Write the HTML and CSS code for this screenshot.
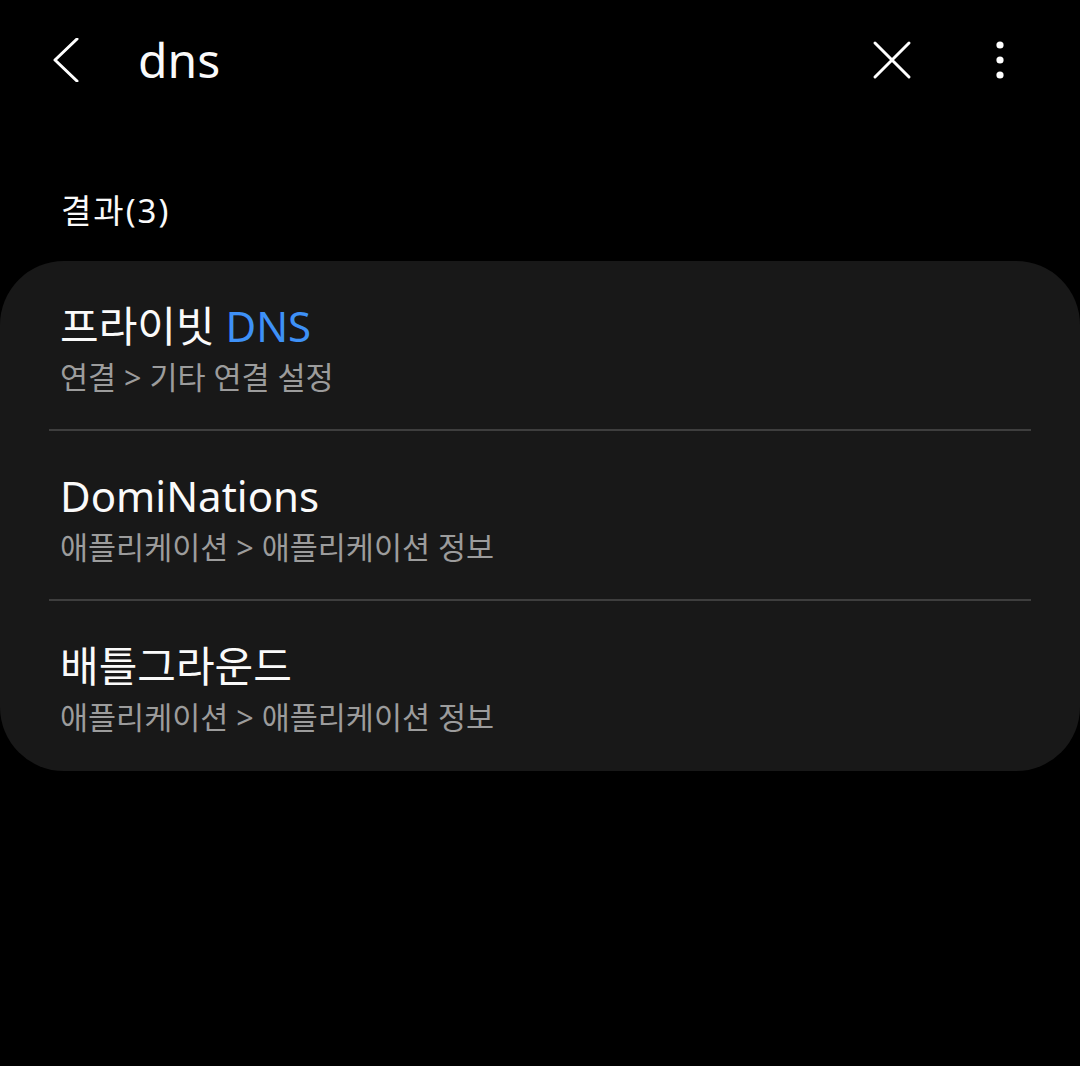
FILE: index.html
```html
<!DOCTYPE html>
<html lang="ko">
<head>
    <meta charset="UTF-8">
    <meta name="viewport" content="width=device-width, initial-scale=1.0">
    <title>설정 검색</title>
    <link rel="stylesheet" href="styles.css">
</head>
<body>
    <header class="search-bar">
        <button class="icon-btn back-btn" aria-label="뒤로">
            <svg width="44" height="44" viewBox="0 0 44 44">
                <path d="M33 1 L11 22 L33 43" fill="none" stroke="#fff" stroke-width="3" stroke-linecap="round" stroke-linejoin="round"/>
            </svg>
        </button>
        <div class="query">dns</div>
        <button class="icon-btn clear-btn" aria-label="지우기">
            <svg width="44" height="44" viewBox="0 0 44 44">
                <path d="M5 5 L39 39 M39 5 L5 39" fill="none" stroke="#fff" stroke-width="3" stroke-linecap="round"/>
            </svg>
        </button>
        <button class="icon-btn more-btn" aria-label="더보기">
            <svg width="44" height="44" viewBox="0 0 44 44">
                <circle cx="22" cy="7" r="3.6" fill="#fff"/>
                <circle cx="22" cy="22" r="3.6" fill="#fff"/>
                <circle cx="22" cy="37" r="3.6" fill="#fff"/>
            </svg>
        </button>
    </header>

    <p class="result-count">결과(3)</p>

    <div class="result-card">
        <div class="result-item">
            <div class="result-title">프라이빗 <span class="match">DNS</span></div>
            <div class="result-path">연결 &gt; 기타 연결 설정</div>
        </div>
        <div class="result-item">
            <div class="result-title">DomiNations</div>
            <div class="result-path">애플리케이션 &gt; 애플리케이션 정보</div>
        </div>
        <div class="result-item">
            <div class="result-title">배틀그라운드</div>
            <div class="result-path">애플리케이션 &gt; 애플리케이션 정보</div>
        </div>
    </div>
</body>
</html>
```

FILE: styles.css
```css
body {
    margin: 0;
    padding: 0;
    background: #000;
    color: #fafafa;
    font-family: "Noto Sans", "Noto Sans CJK KR", sans-serif;
}

.search-bar {
    display: flex;
    align-items: center;
    height: 120px;
    padding: 0 58px 0 44px;
}

.icon-btn {
    width: 44px;
    height: 44px;
    padding: 0;
    border: none;
    background: none;
    display: flex;
}

.query {
    flex: 1;
    margin-left: 50px;
    font-size: 48px;
    line-height: 60px;
}

.clear-btn {
    margin-right: 64px;
}

.result-count {
    margin: 66px 0 0 61px;
    font-size: 33px;
    line-height: 50px;
    height: 75px;
    letter-spacing: 2px;
}

.result-card {
    background: #181818;
    border-radius: 64px;
    padding: 0 49px;
}

.result-item {
    height: 170px;
    box-sizing: border-box;
    padding: 39px 0 0 11px;
    border-bottom: 2px solid #3e3e3e;
}

.result-item:last-child {
    border-bottom: none;
}

.result-title {
    font-size: 42px;
    line-height: 52px;
}

.match {
    color: #3e91f7;
}

.result-path {
    margin-top: 4px;
    font-size: 30.5px;
    line-height: 42px;
    color: #9c9c9c;
}
```
